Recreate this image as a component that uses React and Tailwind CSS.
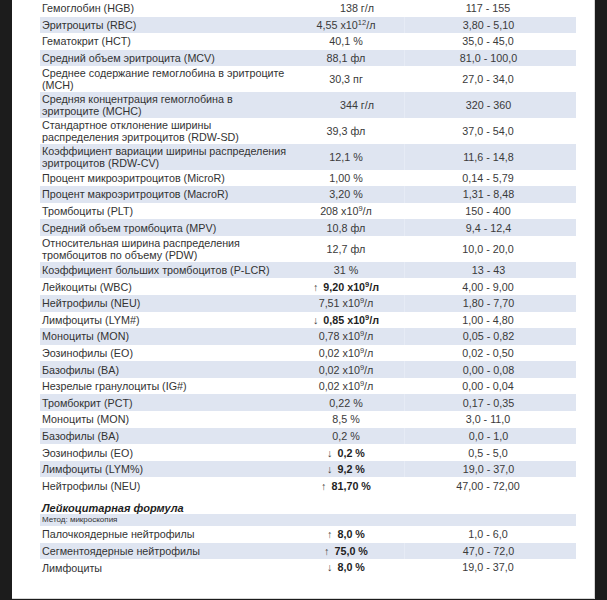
import React from "react";

const rows = [
  { l: ["Гемоглобин (HGB)"], v: "138 г/л", r: "117 - 155", shift: true },
  { l: ["Эритроциты (RBC)"], v: "4,55 x10", sup: "12", unit: "/л", r: "3,80 - 5,10" },
  { l: ["Гематокрит (HCT)"], v: "40,1 %", r: "35,0 - 45,0" },
  { l: ["Средний объем эритроцита (MCV)"], v: "88,1 фл", r: "81,0 - 100,0" },
  { l: ["Среднее содержание гемоглобина в эритроците", "(MCH)"], v: "30,3 пг", r: "27,0 - 34,0" },
  { l: ["Средняя концентрация гемоглобина в", "эритроците (MCHC)"], v: "344 г/л", r: "320 - 360", shift: true },
  { l: ["Стандартное отклонение ширины", "распределения эритроцитов (RDW-SD)"], v: "39,3 фл", r: "37,0 - 54,0" },
  { l: ["Коэффициент вариации ширины распределения", "эритроцитов (RDW-CV)"], v: "12,1 %", r: "11,6 - 14,8" },
  { l: ["Процент микроэритроцитов (MicroR)"], v: "1,00 %", r: "0,14 - 5,79" },
  { l: ["Процент макроэритроцитов (MacroR)"], v: "3,20 %", r: "1,31 - 8,48" },
  { l: ["Тромбоциты (PLT)"], v: "208 x10", sup: "9", unit: "/л", r: "150 - 400" },
  { l: ["Средний объем тромбоцита (MPV)"], v: "10,8 фл", r: "9,4 - 12,4" },
  { l: ["Относительная ширина распределения", "тромбоцитов по объему (PDW)"], v: "12,7 фл", r: "10,0 - 20,0" },
  { l: ["Коэффициент больших тромбоцитов (P-LCR)"], v: "31 %", r: "13 - 43" },
  { l: ["Лейкоциты (WBC)"], v: "9,20 x10", sup: "9", unit: "/л", r: "4,00 - 9,00", f: "up" },
  { l: ["Нейтрофилы (NEU)"], v: "7,51 x10", sup: "9", unit: "/л", r: "1,80 - 7,70" },
  { l: ["Лимфоциты (LYM#)"], v: "0,85 x10", sup: "9", unit: "/л", r: "1,00 - 4,80", f: "down" },
  { l: ["Моноциты (MON)"], v: "0,78 x10", sup: "9", unit: "/л", r: "0,05 - 0,82" },
  { l: ["Эозинофилы (EO)"], v: "0,02 x10", sup: "9", unit: "/л", r: "0,02 - 0,50" },
  { l: ["Базофилы (BA)"], v: "0,02 x10", sup: "9", unit: "/л", r: "0,00 - 0,08" },
  { l: ["Незрелые гранулоциты (IG#)"], v: "0,02 x10", sup: "9", unit: "/л", r: "0,00 - 0,04" },
  { l: ["Тромбокрит (PCT)"], v: "0,22 %", r: "0,17 - 0,35" },
  { l: ["Моноциты (MON)"], v: "8,5 %", r: "3,0 - 11,0" },
  { l: ["Базофилы (BA)"], v: "0,2 %", r: "0,0 - 1,0" },
  { l: ["Эозинофилы (EO)"], v: "0,2 %", r: "0,5 - 5,0", f: "down" },
  { l: ["Лимфоциты (LYM%)"], v: "9,2 %", r: "19,0 - 37,0", f: "down" },
  { l: ["Нейтрофилы (NEU)"], v: "81,70 %", r: "47,00 - 72,00", f: "up" },
];

const rows2 = [
  { l: ["Палочкоядерные нейтрофилы"], v: "8,0 %", r: "1,0 - 6,0", f: "up" },
  { l: ["Сегментоядерные нейтрофилы"], v: "75,0 %", r: "47,0 - 72,0", f: "up" },
  { l: ["Лимфоциты"], v: "8,0 %", r: "19,0 - 37,0", f: "down" },
];

function Value({ row }) {
  const bold = !!row.f;
  return (
    <span className={"whitespace-nowrap " + (bold ? "font-bold text-[#1f1f1f]" : "text-[#3a3a3a]")}>
      {row.f && (
        <span className="font-normal text-[#444] mr-[5px]">{row.f === "up" ? "↑" : "↓"}</span>
      )}
      {row.v}
      {row.sup && <sup className="text-[7.5px] top-[-4px]">{row.sup}</sup>}
      {row.unit}
    </span>
  );
}

function Row({ row, stripe }) {
  const dbl = row.l.length > 1;
  return (
    <div
      className={
        "grid grid-cols-[248px_116px_168px_1fr] items-center " +
        (dbl ? "h-[25.8px] " : "h-[16.6px] ") +
        (stripe ? "bg-[#dfe5f1]" : "bg-white")
      }
    >
      <div className="pl-[2px] leading-[12px] whitespace-nowrap text-[#333]">
        {row.l.map((t, i) => (
          <div key={i}>{t}</div>
        ))}
      </div>
      <div className={"text-center " + (row.shift ? "pl-[22px]" : "")}>
        <Value row={row} />
      </div>
      <div
        className={
          "text-center text-[#3a3a3a] h-full flex items-center justify-center " +
          (stripe ? "border-l border-[#e6ebf5]" : "")
        }
      >
        {row.r}
      </div>
      <div />
    </div>
  );
}

export default function App() {
  return (
    <div
      className="flex w-[607px] h-[600px] bg-[#1c1c1c] overflow-hidden"
      style={{ fontFamily: '"Liberation Sans", Arial, sans-serif' }}
    >
      <div className="w-[12px] shrink-0" />
      <div className="w-[583px] h-[599px] shrink-0 bg-white border-r border-b border-[#d6d6d6]">
        <div className="ml-[28px] w-[536px] text-[10.75px]">
          {rows.map((r, i) => (
            <Row key={i} row={r} stripe={i % 2 === 1} />
          ))}
          <div className="h-[20px] flex items-end pl-[2px]">
            <span className="font-bold italic text-[11px] text-[#1f1f1f] leading-[12px]">
              Лейкоцитарная формула
            </span>
          </div>
          <div className="h-[12px] bg-[#dfe5f1] flex items-center pl-[2px] text-[8px] text-[#333]">
            Метод: микроскопия
          </div>
          {rows2.map((r, i) => (
            <Row key={i} row={r} stripe={i % 2 === 1} />
          ))}
        </div>
      </div>
      <div className="flex-1" />
    </div>
  );
}
